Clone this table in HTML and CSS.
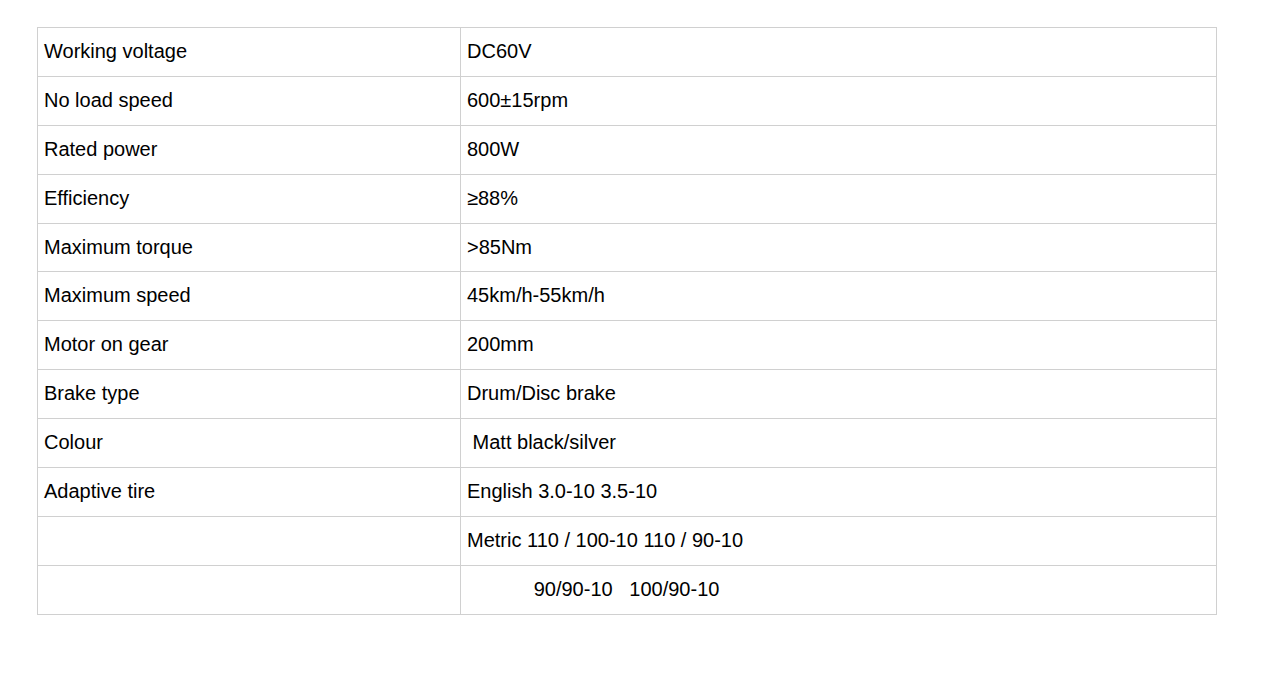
FILE: index.html
```html
<!DOCTYPE html>
<html>
<head>
    <title>Motor Parameters</title>
    <link rel="stylesheet" href="styles.css">
</head>
<body>
    <table class="spec">
        <tr><td class="name">Working voltage</td><td>DC60V</td></tr>
        <tr><td class="name">No load speed</td><td>600±15rpm</td></tr>
        <tr><td class="name">Rated power</td><td>800W</td></tr>
        <tr><td class="name">Efficiency</td><td>≥88%</td></tr>
        <tr><td class="name">Maximum torque</td><td>&gt;85Nm</td></tr>
        <tr><td class="name">Maximum speed</td><td>45km/h-55km/h</td></tr>
        <tr><td class="name">Motor on gear</td><td>200mm</td></tr>
        <tr><td class="name">Brake type</td><td>Drum/Disc brake</td></tr>
        <tr><td class="name">Colour</td><td>&nbsp;Matt black/silver</td></tr>
        <tr><td class="name">Adaptive tire</td><td>English 3.0-10 3.5-10</td></tr>
        <tr><td class="name"></td><td>Metric 110 / 100-10 110 / 90-10</td></tr>
        <tr><td class="name"></td><td class="pre">            90/90-10   100/90-10</td></tr>
    </table>
</body>
</html>
```

FILE: styles.css
```css
body {
    margin: 0;
    background-color: #fff;
    font-family: "Liberation Sans", Arial, sans-serif;
    color: #000;
}

.spec {
    margin: 27px 0 0 37px;
    width: 1180px;
    border-collapse: collapse;
    font-size: 20px;
}

.spec td {
    height: 46.9px;
    padding: 0 6px 1px;
    border: 1px solid #d0d0d0;
    vertical-align: middle;
}

.spec .name {
    width: 410px;
}

.spec .pre {
    white-space: pre;
}
```
